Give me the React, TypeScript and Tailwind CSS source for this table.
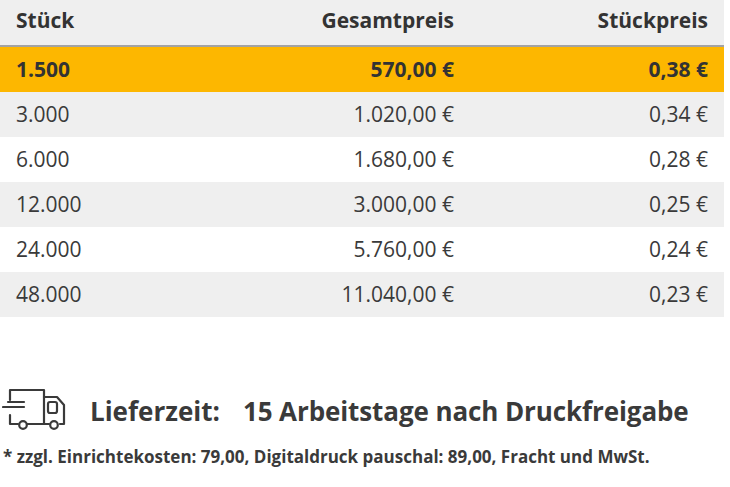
const rows = [
  { qty: "1.500", total: "570,00 €", unit: "0,38 €", hl: true },
  { qty: "3.000", total: "1.020,00 €", unit: "0,34 €" },
  { qty: "6.000", total: "1.680,00 €", unit: "0,28 €" },
  { qty: "12.000", total: "3.000,00 €", unit: "0,25 €" },
  { qty: "24.000", total: "5.760,00 €", unit: "0,24 €" },
  { qty: "48.000", total: "11.040,00 €", unit: "0,23 €" },
];

function Truck() {
  return (
    <svg width="64" height="44" viewBox="0 0 64 44" fill="none" stroke="#3a3a3a" strokeWidth="2.2" strokeLinecap="round" strokeLinejoin="round">
      <path d="M8 13V3H42V37" />
      <path d="M6 15H22" />
      <path d="M1 20H22" />
      <path d="M8 28V37H16" />
      <path d="M25 37H47" />
      <path d="M42 10H55L62 18V37H58" />
      <rect x="46" y="15" width="9" height="11" rx="2" />
      <circle cx="21" cy="38" r="3.8" />
      <circle cx="52" cy="38" r="3.8" />
    </svg>
  );
}

export default function App() {
  return (
    <div className="w-[730px] h-[487px] bg-white text-[#3a3a3a] font-['Open_Sans',sans-serif]">
      {/* Price table */}
      <div className="w-[724px]">
        <div className="grid grid-cols-[250px_188px_1fr] h-[47px] px-4 pt-[5px] bg-[#efefef] border-b-2 border-[#a3a3a3] text-[21px] font-bold text-[#333]">
          <div>Stück</div>
          <div className="text-right">Gesamtpreis</div>
          <div className="text-right">Stückpreis</div>
        </div>
        {rows.map((r, i) => (
          <div
            key={r.qty}
            className={`grid grid-cols-[250px_188px_1fr] items-center h-[45px] px-4 text-[21px] ${
              r.hl ? "bg-[#fdb700] font-bold text-[#333]" : i % 2 === 1 ? "bg-[#efefef]" : "bg-white"
            }`}
          >
            <div>{r.qty}</div>
            <div className="text-right">{r.total}</div>
            <div className="text-right">{r.unit}</div>
          </div>
        ))}
      </div>

      {/* Delivery */}
      <div className="flex items-center mt-[75px] pl-[2px]">
        <div className="-mt-[6px]">
          <Truck />
        </div>
        <div className="ml-[24px] text-[26px] font-bold">Lieferzeit:</div>
        <div className="ml-[23px] text-[26px] font-bold tracking-[-0.1px]">15 Arbeitstage nach Druckfreigabe</div>
      </div>
      <p className="mt-[13px] pl-[3px] text-[17px] font-bold">
        * zzgl. Einrichtekosten: 79,00, Digitaldruck pauschal: 89,00, Fracht und MwSt.
      </p>
    </div>
  );
}
